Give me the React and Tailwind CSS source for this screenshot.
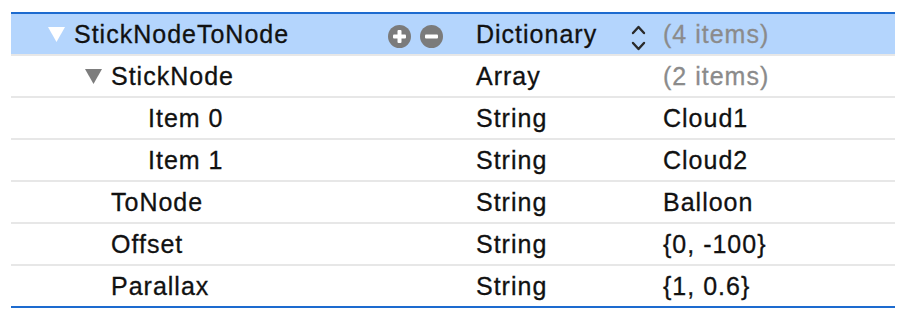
import React from 'react';

const rows = [
  { key: 'StickNodeToNode', level: 0, open: true, type: 'Dictionary', value: '(4 items)', muted: true, selected: true },
  { key: 'StickNode', level: 1, open: true, type: 'Array', value: '(2 items)', muted: true },
  { key: 'Item 0', level: 2, type: 'String', value: 'Cloud1' },
  { key: 'Item 1', level: 2, type: 'String', value: 'Cloud2' },
  { key: 'ToNode', level: 1, type: 'String', value: 'Balloon' },
  { key: 'Offset', level: 1, type: 'String', value: '{0, -100}' },
  { key: 'Parallax', level: 1, type: 'String', value: '{1, 0.6}' },
];

const indent = ['pl-[37px]', 'pl-[74px]', 'pl-[111px]'];

function Disclosure({ light }) {
  return (
    <svg width="17" height="15" viewBox="0 0 17 15" className="shrink-0">
      <polygon points="0,0 17,0 8.5,15" fill={light ? '#ffffff' : '#7d7d7d'} />
    </svg>
  );
}

function RoundButton({ minus }) {
  return (
    <svg width="23" height="23" viewBox="0 0 23 23">
      <circle cx="11.5" cy="11.5" r="11.5" fill="#7b7b7b" />
      <rect x="5" y="9.5" width="13" height="4" rx="1" fill="#fff" />
      {!minus && <rect x="9.5" y="5" width="4" height="13" rx="1" fill="#fff" />}
    </svg>
  );
}

function UpDown() {
  return (
    <svg width="15" height="28" viewBox="0 0 15 28" className="shrink-0">
      <path d="M2 9 L7.5 3 L13 9" fill="none" stroke="#2a2a2a" strokeWidth="2.4" strokeLinecap="round" strokeLinejoin="round" />
      <path d="M2 19 L7.5 25 L13 19" fill="none" stroke="#2a2a2a" strokeWidth="2.4" strokeLinecap="round" strokeLinejoin="round" />
    </svg>
  );
}

function Row({ row, last }) {
  return (
    <div
      className={`flex h-[42px] items-center border-b-2 ${last ? 'border-[#1d6bcf]' : 'border-[#e7e7e7]'} ${row.selected ? 'bg-[#b4d5fd]' : 'bg-white'}`}
    >
      <div className={`flex w-[465px] shrink-0 items-center ${indent[row.level]}`}>
        <div className="flex w-[26px] shrink-0 items-center">
          {row.open && <Disclosure light={row.selected} />}
        </div>
        <span>{row.key}</span>
        {row.selected && (
          <div className="ml-auto mr-[33px] mt-[4px] flex items-center gap-[9px]">
            <RoundButton />
            <RoundButton minus />
          </div>
        )}
      </div>
      <div className="flex w-[187px] shrink-0 items-center pr-[17px]">
        <span>{row.type}</span>
        {row.selected && (
          <div className="ml-auto mt-[8px] flex">
            <UpDown />
          </div>
        )}
      </div>
      <div className={row.muted ? 'text-[#8b8b8b]' : ''}>{row.value}</div>
    </div>
  );
}

export default function App() {
  return (
    <div className="h-[324px] w-[906px] bg-white pt-[12px]">
      <div
        className="ml-[11px] w-[884px] border-t-2 border-[#1d6bcf] text-[25px] leading-[40px] tracking-[1px] text-[#111] [-webkit-text-stroke:0.3px_currentColor]"
        style={{ fontFamily: '"Liberation Sans", Arial, sans-serif' }}
      >
        {rows.map((row, i) => (
          <Row key={row.key} row={row} last={i === rows.length - 1} />
        ))}
      </div>
    </div>
  );
}
